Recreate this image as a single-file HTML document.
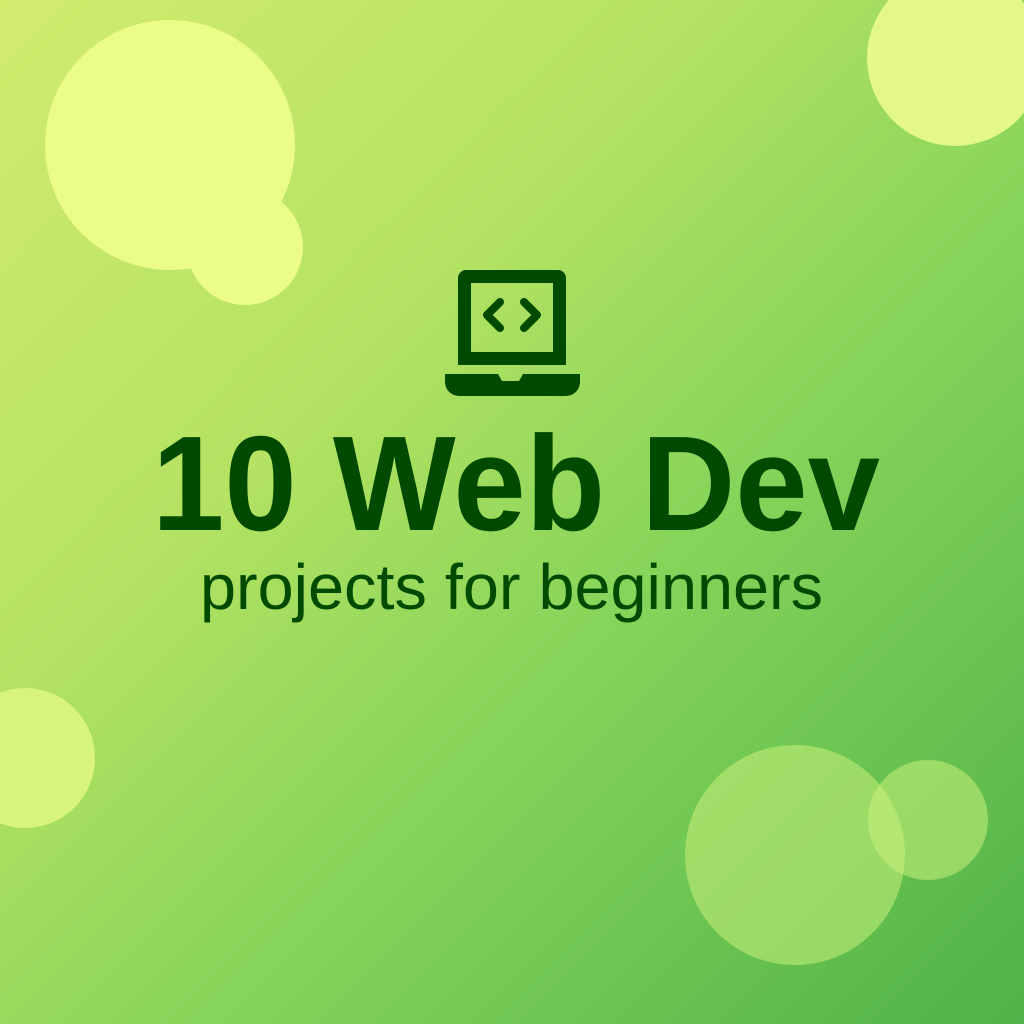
<!DOCTYPE html>
<html><head><meta charset="utf-8"><style>html,body{margin:0;padding:0;width:1024px;height:1024px;overflow:hidden}</style></head>
<body>
<svg width="1024" height="1024" viewBox="0 0 1024 1024" xmlns="http://www.w3.org/2000/svg">
<defs>
<linearGradient id="bg" x1="0" y1="0" x2="1" y2="1">
<stop offset="0" stop-color="#d2ec6e"/>
<stop offset="0.35" stop-color="#b4e262"/>
<stop offset="0.6" stop-color="#86d45a"/>
<stop offset="1" stop-color="#4fb248"/>
</linearGradient>
</defs>
<rect width="1024" height="1024" fill="url(#bg)"/>
<circle cx="170" cy="145" r="125" fill="#ecfc88"/>
<circle cx="245" cy="247" r="58" fill="#ecfc88"/>
<circle cx="955" cy="58" r="88" fill="#e4f888"/>
<circle cx="25" cy="758" r="70" fill="#d8f47c"/>
<circle cx="795" cy="855" r="110" fill="#c8f07a" fill-opacity="0.55"/>
<circle cx="928" cy="820" r="60" fill="#c8f07a" fill-opacity="0.55"/>
<g fill="#004a00">
<path fill-rule="evenodd" d="M466 270h92a8 8 0 0 1 8 8v87h-108v-87a8 8 0 0 1 8-8zM471 283v69h82v-69z"/>
<path d="M445 374h53l4 7h17l4-7h57v8a14 14 0 0 1-14 14h-107a14 14 0 0 1-14-14z"/>
<path d="M500 302l-13 13 13 13" stroke="#004a00" stroke-width="8" fill="none" stroke-linecap="round" stroke-linejoin="round"/>
<path d="M524 302l13 13-13 13" stroke="#004a00" stroke-width="8" fill="none" stroke-linecap="round" stroke-linejoin="round"/>
</g>
<text x="152" y="530" textLength="728" lengthAdjust="spacingAndGlyphs" font-family="Liberation Sans, sans-serif" font-weight="bold" font-size="135" fill="#004a00">10 Web Dev</text>
<text x="200" y="609" textLength="623" lengthAdjust="spacingAndGlyphs" font-family="Liberation Sans, sans-serif" font-size="64" fill="#004a00">projects for beginners</text>
</svg>
</body></html>
